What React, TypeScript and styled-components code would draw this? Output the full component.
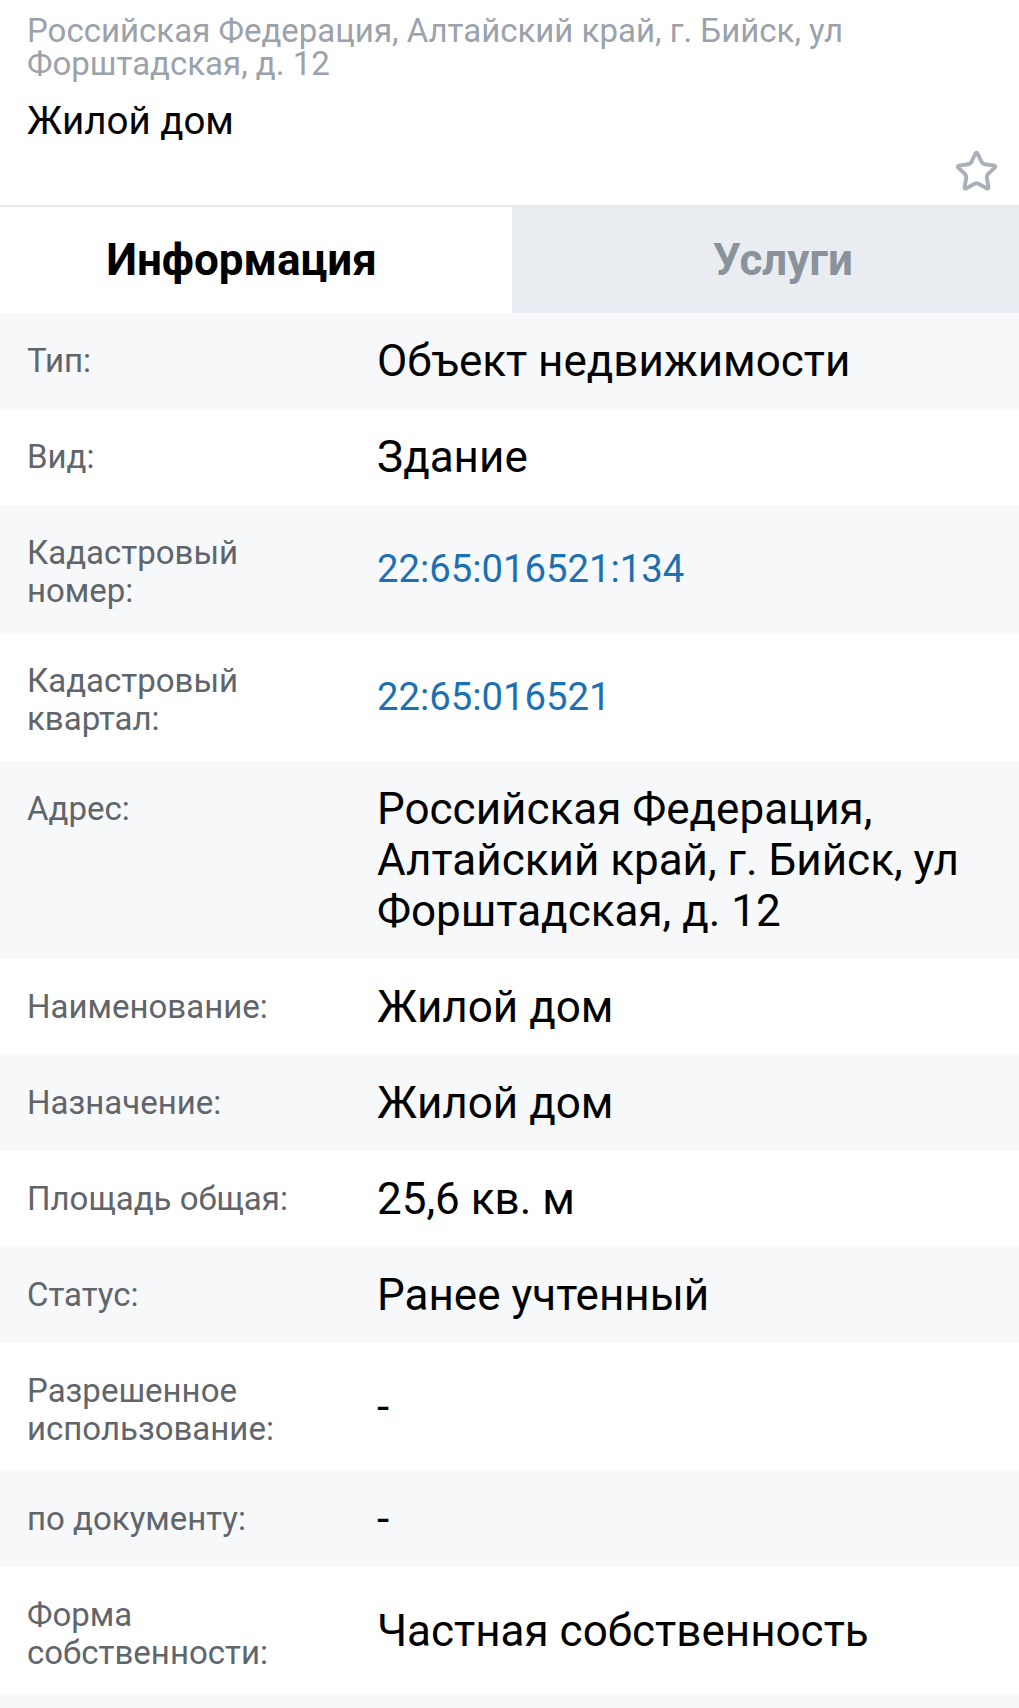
import * as React from 'react';
import styled, { createGlobalStyle } from 'styled-components';
import { Star } from 'lucide-react';

const GlobalStyle = createGlobalStyle`
    html, body {
        margin: 0;
        padding: 0;
        background: #ffffff;
        font-family: Roboto, "Noto Sans", "Liberation Sans", sans-serif;
    }
    * {
        box-sizing: border-box;
    }
`;

const Page = styled.div`
    width: 1019px;
    background: #ffffff;
`;

const Header = styled.header`
    display: flex;
    flex-direction: column;
    padding: 14px 27px 11px;
    border-bottom: 2px solid #e6e8eb;
`;

const Address = styled.div`
    font-size: 33px;
    line-height: 33px;
    color: #9ba2ac;
`;

const Title = styled.div`
    margin-top: 19px;
    font-size: 38.5px;
    line-height: 44px;
    color: #000000;
`;

const FavRow = styled.div`
    display: flex;
    justify-content: flex-end;
    margin: 6px -7px 0 0;
    color: #a9b0ba;
`;

const Tabs = styled.div`
    display: grid;
    grid-template-columns: 512px 1fr;
    height: 106px;
`;

const Tab = styled.div<{ $active?: boolean; $shift: number }>`
    display: flex;
    align-items: center;
    justify-content: center;
    padding-left: ${(p) => (p.$shift > 0 ? p.$shift : 0)}px;
    padding-right: ${(p) => (p.$shift < 0 ? -p.$shift : 0)}px;
    font-size: 44px;
    font-weight: 700;
    background: ${(p) => (p.$active ? '#ffffff' : '#e9ecf0')};
    color: ${(p) => (p.$active ? '#000000' : '#8a929c')};
`;

const Row = styled.div<{ $odd: boolean }>`
    display: grid;
    grid-template-columns: 350px 1fr;
    padding: 22.5px 27px;
    background: ${(p) => (p.$odd ? '#f7f8fa' : '#ffffff')};
`;

const Label = styled.div`
    align-self: start;
    padding-top: 6.5px;
    font-size: 33px;
    line-height: 38.25px;
    color: #60656b;
`;

const Value = styled.div<{ $link?: boolean }>`
    align-self: center;
    font-size: ${(p) => (p.$link ? '38.25px' : '44px')};
    line-height: 51px;
    color: ${(p) => (p.$link ? '#1c70b4' : '#000000')};
`;

type Field = { label: string[]; value: string; link?: boolean };

const fields: Field[] = [
    { label: ['Тип:'], value: 'Объект недвижимости' },
    { label: ['Вид:'], value: 'Здание' },
    { label: ['Кадастровый', 'номер:'], value: '22:65:016521:134', link: true },
    { label: ['Кадастровый', 'квартал:'], value: '22:65:016521', link: true },
    { label: ['Адрес:'], value: 'Российская Федерация, Алтайский край, г. Бийск, ул Форштадская, д. 12' },
    { label: ['Наименование:'], value: 'Жилой дом' },
    { label: ['Назначение:'], value: 'Жилой дом' },
    { label: ['Площадь общая:'], value: '25,6 кв. м' },
    { label: ['Статус:'], value: 'Ранее учтенный' },
    { label: ['Разрешенное', 'использование:'], value: '-' },
    { label: ['по документу:'], value: '-' },
    { label: ['Форма', 'собственности:'], value: 'Частная собственность' },
    { label: ['Дата постановки', 'на учет:'], value: '-' },
];

export default function App() {
    return (
        <Page>
            <GlobalStyle />
            <Header>
                <Address>Российская Федерация, Алтайский край, г. Бийск, ул Форштадская, д. 12</Address>
                <Title>Жилой дом</Title>
                <FavRow>
                    <Star size={45} strokeWidth={2.1} />
                </FavRow>
            </Header>
            <Tabs>
                <Tab $active $shift={-29}>Информация</Tab>
                <Tab $shift={35}>Услуги</Tab>
            </Tabs>
            {fields.map((f, i) => (
                <Row key={i} $odd={i % 2 === 0}>
                    <Label>
                        {f.label.map((l, j) => (
                            <div key={j}>{l}</div>
                        ))}
                    </Label>
                    <Value $link={f.link}>{f.value}</Value>
                </Row>
            ))}
        </Page>
    );
}
